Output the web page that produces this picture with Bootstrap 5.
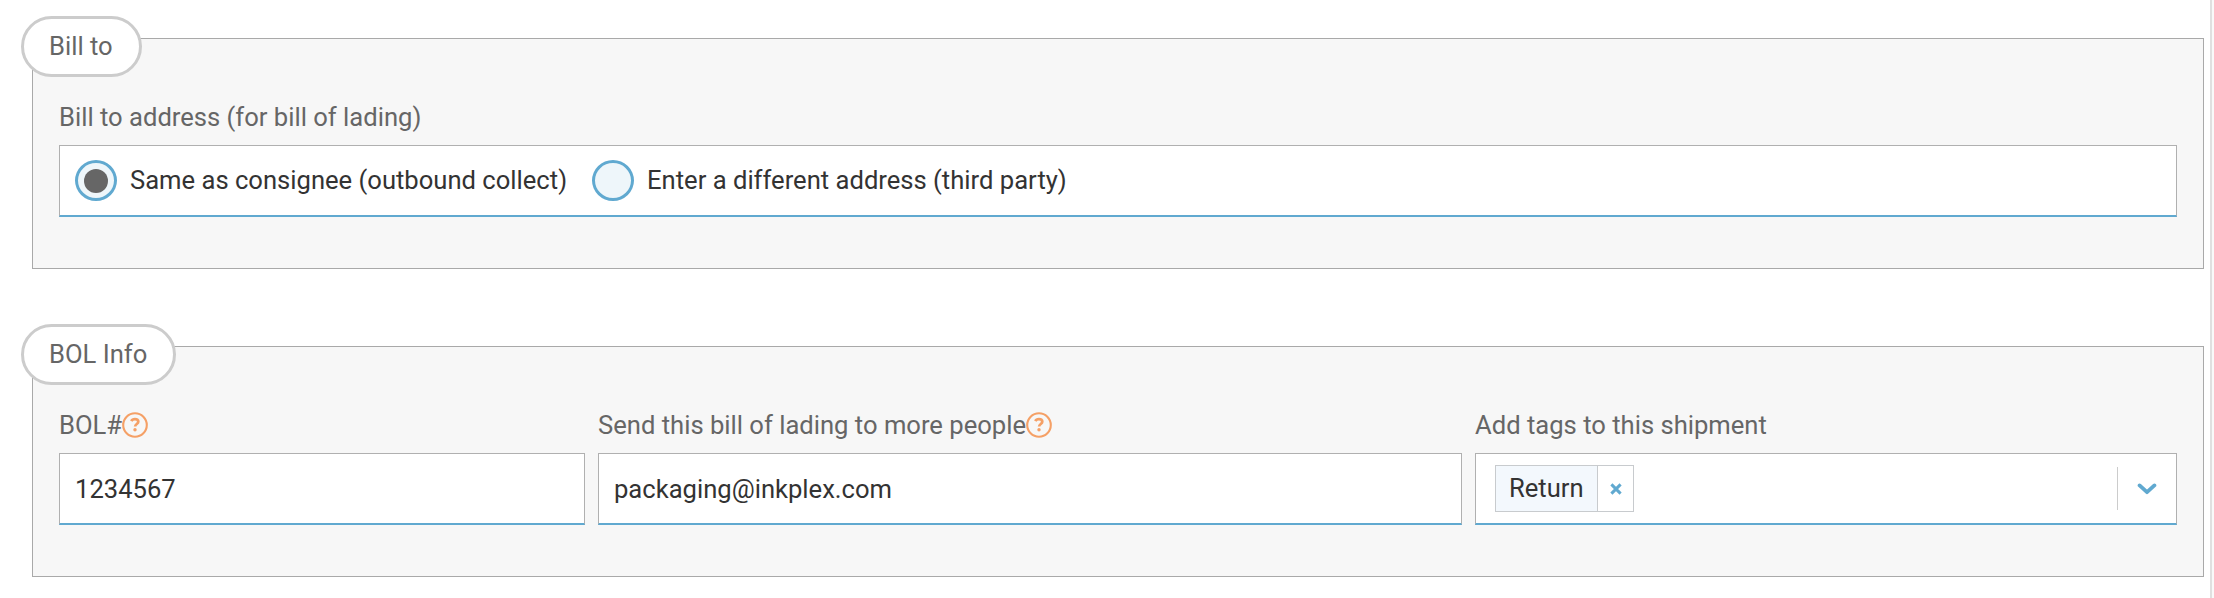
<!DOCTYPE html>
<html lang="en">
<head>
<meta charset="utf-8">
<title>Bill of lading</title>
<link href="https://cdn.jsdelivr.net/npm/bootstrap@5.3.0/dist/css/bootstrap.min.css" rel="stylesheet">
<style>
body{font-family:Roboto,"Liberation Sans",sans-serif;font-size:25.6px;line-height:30px;color:#333;background:#fff;height:598px;overflow:hidden}
.page-main{width:2212px;height:598px;padding:38px 6px 0 32px;border-right:2px solid #e0e0e0}
.page-edge{background:#f9f9f9}
.panel{height:231px;margin-bottom:77px;background:#f7f7f7;border:1px solid #a9a9a9;padding:63px 26px 0}
.panel-title{top:-23px;left:-12px;height:61px;border:3px solid #ccc;border-radius:31px;background:#fff;color:#666;padding:0 26px 0 25px;font-size:25.6px;line-height:54px}
.field-label{height:43px;color:#666;line-height:30px}
.field{height:72px;border:1px solid #b0b0b0;border-bottom:2px solid #60a9d0;background:#fff;color:#333}
input.field{padding:0 15px;outline:0;min-width:0}
.fields{display:grid;grid-template-columns:526px 864px 702px;column-gap:13px}
.choices{padding-left:15px;gap:25px}
.choice-dot{width:42px;height:41px;border:3px solid #60a9d0;border-radius:50%;background:#eef6fa}
.choice-dot i{width:24px;height:24px;border-radius:50%;background:#666}
.choice-text{margin-left:13px;padding-bottom:2px}
.help{margin-top:2px}
.tag{height:47px;border:1px solid #c8cbce;margin-left:19px}
.tag-name{background:#f3f8fd;border-right:1px solid #c8cbce;padding:0 13px;line-height:44px;width:102px}
.tag-close{width:35px}
.sep{width:1px;height:43px;background:#ccc}
.arrow{width:58px}
</style>
</head>
<body>
<div class="d-flex">
<main class="page-main flex-shrink-0">
  <section class="panel position-relative">
    <h2 class="panel-title position-absolute m-0 fw-normal text-nowrap">Bill to</h2>
    <div class="field-label">Bill to address (for bill of lading)</div>
    <div class="field choices d-flex align-items-center">
      <label class="d-flex align-items-center"><span class="choice-dot d-flex align-items-center justify-content-center"><i></i></span><span class="choice-text">Same as consignee (outbound collect)</span></label>
      <label class="d-flex align-items-center"><span class="choice-dot"></span><span class="choice-text">Enter a different address (third party)</span></label>
    </div>
  </section>
  <section class="panel position-relative">
    <h2 class="panel-title position-absolute m-0 fw-normal text-nowrap">BOL Info</h2>
    <div class="fields">
      <div>
        <div class="field-label d-flex">BOL#<svg width="26" height="26" viewBox="0 0 26 26" class="help" fill="none" stroke="#f5a066"><circle cx="13" cy="13" r="11.8" stroke-width="2.1"/><path d="M9.3 9.2c.7-1.4 2-2 3.6-2 2 0 3.4.9 3.4 2.5 0 2.2-3 2.4-3.2 4.8" stroke-width="2.7"/><circle cx="13" cy="17.8" r="1.7" fill="#f5a066" stroke="none"/></svg></div>
        <input class="field w-100" value="1234567">
      </div>
      <div>
        <div class="field-label d-flex">Send this bill of lading to more people<svg width="26" height="26" viewBox="0 0 26 26" class="help" fill="none" stroke="#f5a066"><circle cx="13" cy="13" r="11.8" stroke-width="2.1"/><path d="M9.3 9.2c.7-1.4 2-2 3.6-2 2 0 3.4.9 3.4 2.5 0 2.2-3 2.4-3.2 4.8" stroke-width="2.7"/><circle cx="13" cy="17.8" r="1.7" fill="#f5a066" stroke="none"/></svg></div>
        <input class="field w-100" value="packaging@inkplex.com">
      </div>
      <div>
        <div class="field-label">Add tags to this shipment</div>
        <div class="field d-flex align-items-center">
          <div class="tag d-flex"><span class="tag-name">Return</span><span class="tag-close d-flex align-items-center justify-content-center"><svg width="12" height="12" viewBox="0 0 12 12" stroke="#60a9d0" stroke-width="3"><path d="M1.4 1.4l9.2 9.2M10.6 1.4l-9.2 9.2"/></svg></span></div>
          <span class="sep ms-auto"></span>
          <span class="arrow d-flex justify-content-center"><svg width="20" height="12" viewBox="0 0 20 12" fill="none" stroke="#60a9d0" stroke-width="3.8" stroke-linecap="round" stroke-linejoin="round"><path d="M2.6 2.4L10 9.2l7.4-6.8"/></svg></span>
        </div>
      </div>
    </div>
  </section>
</main>
<div class="page-edge flex-fill"></div>
</div>
<script src="https://cdn.jsdelivr.net/npm/bootstrap@5.3.0/dist/js/bootstrap.bundle.min.js"></script>
</body>
</html>
